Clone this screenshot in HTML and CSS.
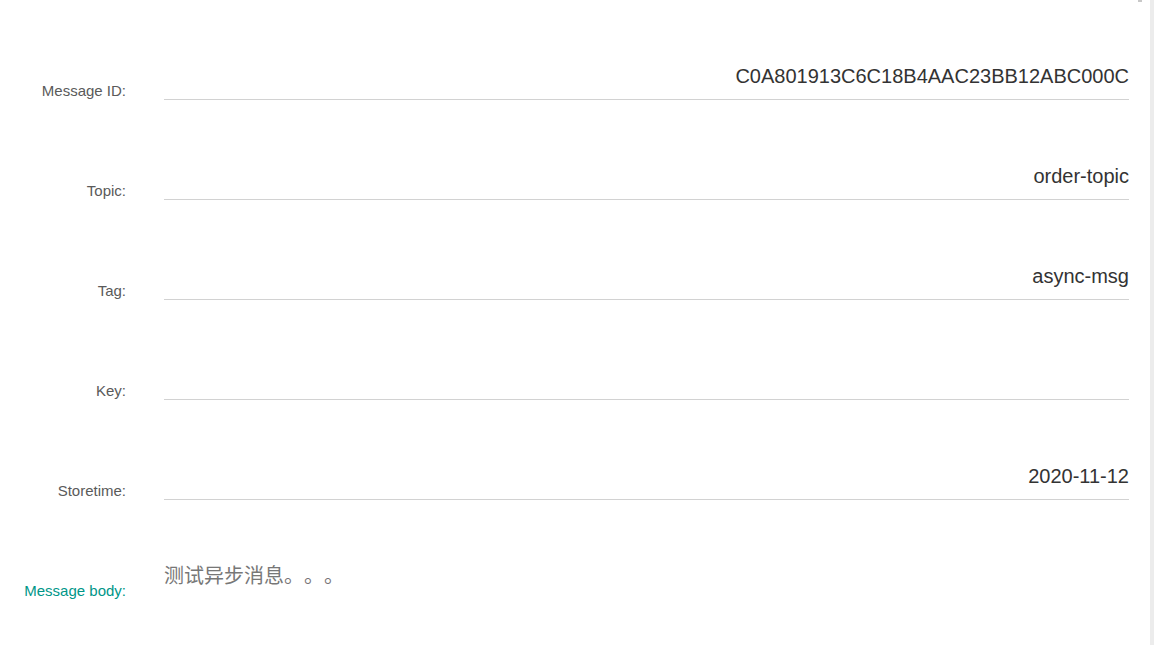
FILE: index.html
```html
<!DOCTYPE html>
<html lang="en">
<head>
<meta charset="utf-8">
<title>Message detail</title>
<link rel="stylesheet" href="styles.css">
</head>
<body>
<div class="page">
  <main class="detail">
    <div class="row">
      <label class="label">Message ID:</label>
      <div class="field">C0A801913C6C18B4AAC23BB12ABC000C</div>
    </div>
    <div class="row">
      <label class="label">Topic:</label>
      <div class="field">order-topic</div>
    </div>
    <div class="row">
      <label class="label">Tag:</label>
      <div class="field">async-msg</div>
    </div>
    <div class="row">
      <label class="label">Key:</label>
      <div class="field"></div>
    </div>
    <div class="row">
      <label class="label">Storetime:</label>
      <div class="field">2020-11-12</div>
    </div>
    <div class="row row-body">
      <label class="label label-active">Message body:</label>
      <div class="body-text" lang="zh-CN">测试异步消息。。。</div>
    </div>
  </main>
  <div class="scroll-track"><span class="scroll-arrow"></span></div>
</div>
</body>
</html>
```

FILE: styles.css
```css
html, body {
  margin: 0;
  padding: 0;
  background: #fff;
}

body {
  font-family: "Liberation Sans", Arial, "Noto Sans CJK SC", sans-serif;
}

.page {
  display: flex;
  height: 645px;
  overflow: hidden;
}

.detail {
  flex: 1;
  display: flex;
  flex-direction: column;
  padding-right: 21px;
}

.row {
  display: flex;
  align-items: flex-end;
  gap: 38px;
  height: 100px;
  flex: 0 0 100px;
}

.label {
  width: 126px;
  flex: 0 0 126px;
  text-align: right;
  font-size: 15px;
  line-height: 18px;
  color: #5a5a5a;
}

.label-active {
  color: #009688;
}

.field {
  flex: 1;
  height: 40px;
  line-height: 32px;
  font-size: 20px;
  color: #333;
  text-align: right;
  border-bottom: 1px solid #d2d2d2;
  box-sizing: border-box;
  white-space: nowrap;
}

.row-body {
  align-items: stretch;
}

.row-body .label {
  align-self: flex-end;
}

.body-text {
  flex: 1;
  padding-top: 61px;
  font-family: "Noto Sans CJK SC", "Liberation Sans", sans-serif;
  font-size: 20px;
  line-height: 28px;
  color: #777;
  text-spacing-trim: space-all;
}

.scroll-track {
  position: relative;
  flex: 0 0 4px;
  background: #ececec;
}

.scroll-arrow {
  position: absolute;
  top: 0;
  left: -12px;
  width: 4px;
  height: 2px;
  background: #c8c8c8;
}
```
